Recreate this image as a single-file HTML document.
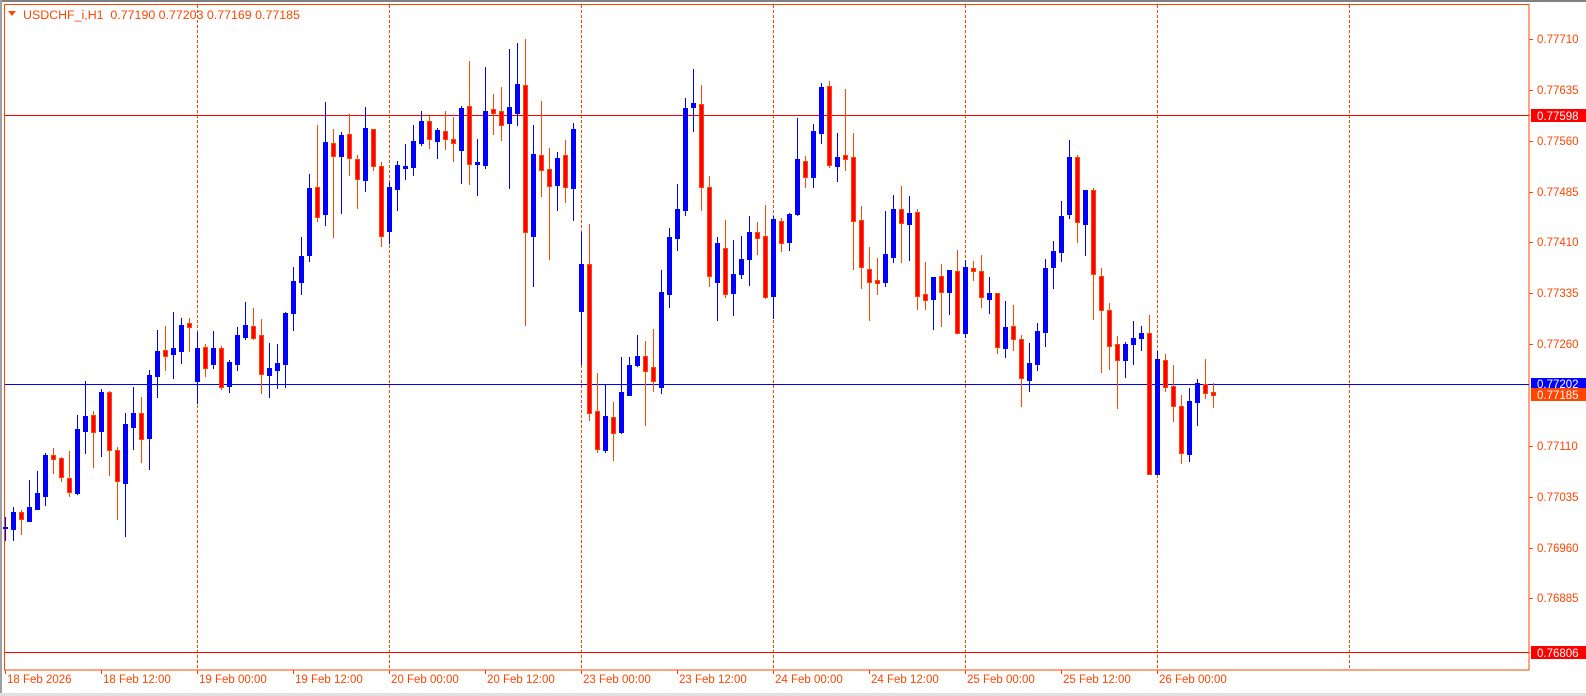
<!DOCTYPE html>
<html><head><meta charset="utf-8">
<style>
html,body{margin:0;padding:0;background:#fff;}
body{width:1586px;height:696px;overflow:hidden;position:relative;font-family:"Liberation Sans",sans-serif;}
svg{position:absolute;left:0;top:0;}
text{font-family:"Liberation Sans",sans-serif;font-size:11.5px;}
</style></head><body>
<svg id="s" width="1586" height="696" xmlns="http://www.w3.org/2000/svg">
<rect x="0" y="0" width="1586" height="696" fill="#fff"/>
<rect x="0" y="0" width="1586" height="2" fill="#808080"/>
<rect x="0" y="0" width="2" height="696" fill="#a0a0a0"/>
<rect x="0" y="693" width="1586" height="3" fill="#e0e0e0"/>
<rect x="4.5" y="4.5" width="1524.5" height="665.5" fill="none" stroke="#ff4500" stroke-width="1"/>
<g stroke="#ff4500" stroke-width="1" stroke-dasharray="3,2">
<line x1="197.5" y1="5" x2="197.5" y2="670"/><line x1="389.5" y1="5" x2="389.5" y2="670"/>
<line x1="581.5" y1="5" x2="581.5" y2="670"/><line x1="773.5" y1="5" x2="773.5" y2="670"/>
<line x1="965.5" y1="5" x2="965.5" y2="670"/><line x1="1157.5" y1="5" x2="1157.5" y2="670"/>
<line x1="1349.5" y1="5" x2="1349.5" y2="670"/>
</g>
<line x1="5" y1="115.5" x2="1529" y2="115.5" stroke="#ff0000"/>
<line x1="5" y1="384.5" x2="1529" y2="384.5" stroke="#0000ff"/>
<line x1="5" y1="652.5" x2="1529" y2="652.5" stroke="#ff0000"/>
<g id="c"></g>
<polygon points="8,11 16,11 12,16" fill="#ff4500"/>
<text x="23" y="19" fill="#ff4500" style="font-size:12.4px">USDCHF_i,H1&#160;&#160;0.77190 0.77203 0.77169 0.77185</text>
<g fill="#ff4500" id="ax"></g>
</svg>
<script>
var d=[
["b",527,528,517,540],
["b",512,529,507,540],["r",512,519,510,534],["b",507,521,480,521],["b",493,509,471,509],["b",455,496,453,505],
["r",455,459,448,473],["r",458,477,457,481],["r",478,492,451,496],["b",429,493,415,494],["b",416,431,381,453],
["r",415,432,411,467],["b",392,431,389,456],["r",392,450,391,475],["r",450,481,447,519],["b",424,483,413,536],
["b",413,427,387,449],["r",413,439,397,462],["b",375,438,370,469],["b",351,376,330,397],["r",350,356,326,370],
["b",348,354,312,378],["b",325,351,318,363],["r",323,327,318,351],["b",348,381,332,403],["r",347,368,344,376],
["b",348,364,331,368],["r",348,387,346,389],["b",362,386,360,392],["b",335,364,327,370],["b",325,337,302,339],
["r",326,338,308,339],["r",335,374,319,393],["b",368,375,343,397],["b",363,370,344,388],["b",313,364,312,387],
["b",281,313,267,330],["b",256,282,237,294],["b",188,255,174,261],["r",187,217,125,221],["b",142,214,102,225],
["r",143,156,129,237],["b",135,156,132,213],["r",134,158,114,175],["r",159,179,155,208],["b",128,180,107,191],
["r",129,166,129,170],["r",166,236,162,246],["b",187,231,182,243],["b",165,189,161,210],["b",166,168,144,179],
["b",141,167,125,175],["b",121,143,111,145],["r",121,139,116,148],["b",130,141,128,158],["r",131,139,111,149],
["r",139,143,117,161],["b",108,150,106,183],["r",106,164,61,184],["b",162,164,139,195],["b",111,165,67,168],
["r",109,113,94,134],["r",111,125,87,140],["b",107,123,49,188],["b",84,113,43,125],["r",85,232,39,325],
["b",154,236,125,286],["r",155,170,101,196],["r",169,186,148,259],["b",158,185,152,210],["r",155,187,140,202],
["b",129,188,123,220],["b",264,311,232,364],["r",264,413,224,420],["r",411,449,373,452],["b",416,450,384,452],
["r",417,433,402,460],["b",392,432,357,433],["b",365,395,357,395],["b",356,365,335,366],["r",356,371,341,425],
["r",367,381,329,391],["b",292,387,270,393],["b",237,294,228,307],["b",209,238,184,250],["b",108,210,98,215],
["b",103,107,69,131],["r",104,187,85,210],["r",187,276,176,286],["b",243,282,237,320],["r",248,294,220,297],
["b",274,293,240,315],["b",259,274,236,278],["b",232,259,216,285],["r",232,238,222,254],["r",236,297,205,298],
["b",219,296,216,318],["r",221,243,218,251],["b",214,242,213,250],["b",159,214,118,215],["r",161,177,156,187],
["b",131,177,124,187],["b",87,133,83,143],["r",86,165,81,167],["b",157,166,133,181],["r",155,159,89,170],
["r",157,221,133,269],["r",220,267,206,288],["r",269,282,247,320],["r",280,283,258,294],["b",254,282,211,286],
["b",209,257,195,262],["r",209,223,186,262],["b",213,224,196,260],["r",212,296,209,309],["r",294,300,262,309],
["b",277,299,277,329],["r",276,292,264,326],["b",270,292,270,314],["r",271,333,250,333],["b",267,333,260,337],
["r",268,271,261,280],["r",271,297,255,307],["b",293,299,277,313],["r",293,347,293,353],["b",327,348,301,357],
["r",326,339,305,350],["r",339,378,335,406],["b",363,380,343,391],["b",331,364,323,370],["b",268,332,259,346],
["b",251,267,241,288],["b",216,252,201,261],["b",157,214,140,218],["r",157,222,155,242],["b",190,224,190,255],
["r",190,274,188,319],["r",276,310,268,372],["r",310,346,303,369],["r",344,360,336,408],["b",344,360,342,377],
["b",338,344,321,364],["b",333,338,326,350],["r",333,474,315,474],["b",359,474,351,474],["r",360,387,354,391],
["r",386,406,365,421],["r",406,453,395,463],["b",401,454,388,461],["b",383,402,379,425],["r",384,393,359,398],
["r",392,395,383,407]
];
var g=document.getElementById("c"),h="";
for(var i=0;i<d.length;i++){var c=d[i],k=i-1,cx=13+8*k;
var col=c[0]=="b"?"#0000ff":"#ff4500";
h+='<rect x="'+cx+'" y="'+c[3]+'" width="1" height="'+(c[4]-c[3]+1)+'" fill="'+col+'"/>';
var bh=Math.max(1,c[2]-c[1]+1);
if(c[0]=="b")h+='<rect x="'+(cx-2)+'" y="'+c[1]+'" width="5" height="'+bh+'" fill="#0000ff"/>';
else h+='<rect x="'+(cx-1.5)+'" y="'+(c[1]+0.5)+'" width="4" height="'+Math.max(1,bh-1)+'" fill="#ff0000" stroke="#ff4500" stroke-width="1"/>';
}
g.innerHTML=h;
var ax="",L=[["0.77710",39],["0.77635",90],["0.77560",141],["0.77485",192],["0.77410",242],["0.77335",293],["0.77260",344],["0.77110",446],["0.77035",497],["0.76960",548],["0.76885",598]];
for(var j=0;j<L.length;j++){ax+='<rect x="1529" y="'+L[j][1]+'" width="4" height="1"/><text x="1537" y="'+(L[j][1]+4)+'">'+L[j][0]+'</text>';}
ax+='<rect x="1531" y="109" width="55" height="13" fill="#ff0000"/><text x="1537" y="120" fill="#fff">0.77598</text>';
ax+='<rect x="1531" y="378" width="55" height="12" fill="#0000ff"/><text x="1537" y="388" fill="#fff">0.77202</text>';
ax+='<rect x="1531" y="388" width="55" height="13" fill="#ff4500"/><text x="1537" y="399" fill="#fff">0.77185</text>';
ax+='<rect x="1531" y="646" width="55" height="13" fill="#ff0000"/><text x="1537" y="657" fill="#fff">0.76806</text>';
var D=["18 Feb 2026","18 Feb 12:00","19 Feb 00:00","19 Feb 12:00","20 Feb 00:00","20 Feb 12:00","23 Feb 00:00","23 Feb 12:00","24 Feb 00:00","24 Feb 12:00","25 Feb 00:00","25 Feb 12:00","26 Feb 00:00"];
for(var m=0;m<D.length;m++){var x=5+96*m;ax+='<rect x="'+x+'" y="670" width="1" height="4"/><text x="'+(x+2)+'" y="683">'+D[m]+'</text>';}
document.getElementById("ax").innerHTML=ax;
</script>
</body></html>
